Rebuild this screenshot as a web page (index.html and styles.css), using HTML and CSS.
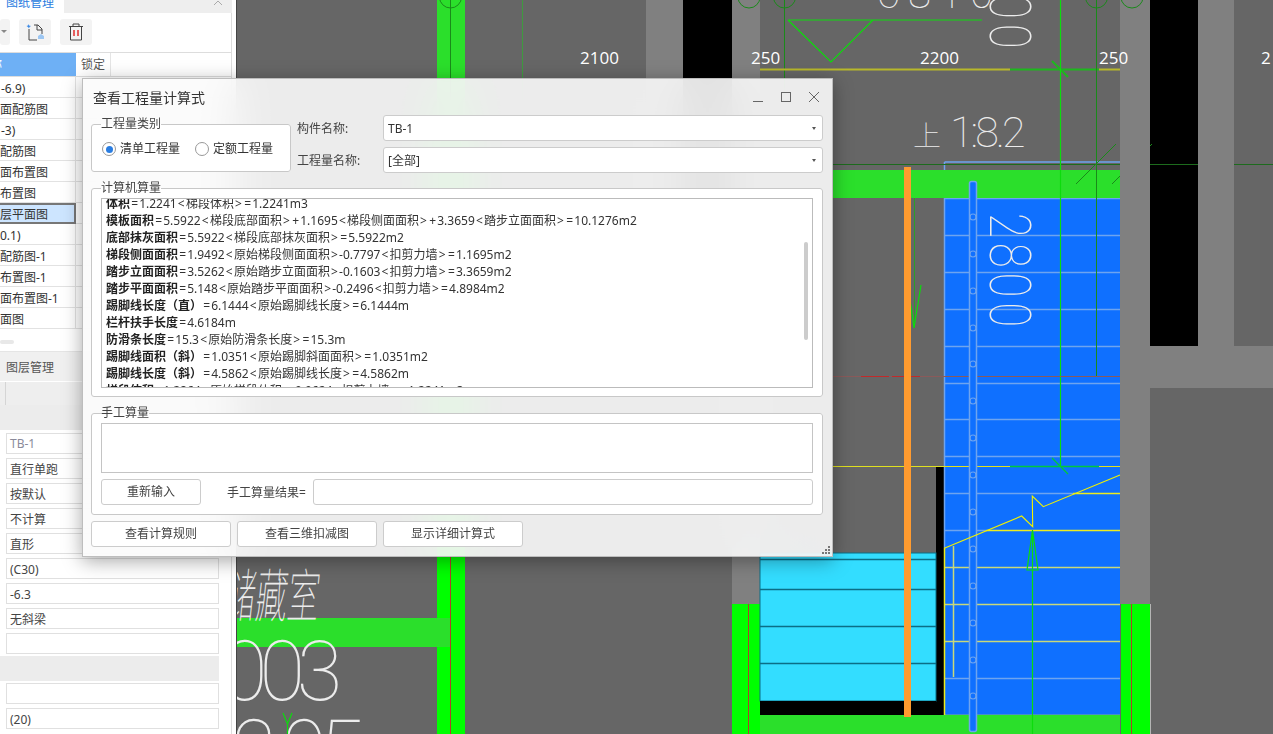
FILE: index.html
```html
<!DOCTYPE html>
<html lang="zh-CN">
<head>
<meta charset="utf-8">
<title>查看工程量计算式</title>
<link rel="stylesheet" href="styles.css">
</head>
<body>
<div class="app">
  <aside class="side">
    <div class="tabs-top">
      <span class="tab-active">图纸管理</span>
      <svg class="tab-close" width="10" height="6" viewBox="0 0 10 6"><path d="M1 5 5 1 9 5" class="ico-grey"/></svg>
    </div>
    <div class="toolbar">
      <div class="tool tool-cut"><svg width="8" height="6" viewBox="0 0 8 6"><path d="M0 1h6L3 4z" fill="#888"/></svg></div>
      <div class="tool">
        <svg width="18" height="18" viewBox="0 0 18 18">
          <path d="M3 6v11h8M8 2h4l4 4v5M16 7h-5V2" class="ico-dark"/>
          <path d="M2 1l1 1.5L5 3 3.500 4 3 5.500 2 4 .5 3 2 2.500z" fill="#3b8ae6"/>
          <path d="M12 13l3-2 3 2v3h-6z" fill="#9cc6f2"/>
        </svg>
      </div>
      <div class="tool">
        <svg width="16" height="18" viewBox="0 0 16 18">
          <path d="M1 3.500h14M5 3.500V1h6v2.500M2.500 3.500V17h11V3.500" class="ico-dark"/>
          <path d="M6 7v6M10 7v6" class="ico-red"/>
        </svg>
      </div>
    </div>
    <div class="thead">
      <div class="th-name"><span class="th-clip">称</span></div>
      <div class="th-lock">锁定</div>
    </div>
    <div class="trow"><span class="tcell tcell-in">-6.9)</span></div>
    <div class="trow"><span class="tcell">面配筋图</span></div>
    <div class="trow"><span class="tcell tcell-in">-3)</span></div>
    <div class="trow"><span class="tcell">配筋图</span></div>
    <div class="trow"><span class="tcell">面布置图</span></div>
    <div class="trow"><span class="tcell">布置图</span></div>
    <div class="trow trow-sel"><span class="tcell">层平面图</span></div>
    <div class="trow"><span class="tcell">0.1)</span></div>
    <div class="trow"><span class="tcell">配筋图-1</span></div>
    <div class="trow"><span class="tcell">布置图-1</span></div>
    <div class="trow"><span class="tcell">面布置图-1</span></div>
    <div class="trow"><span class="tcell">面图</span></div>
    <div class="hscroll"><div class="hthumb"></div></div>
    <div class="tabs-low"><span>图层管理</span></div>
    <div class="prop-head"><div class="prop-head-cell"></div></div>
    <div class="prop-group"></div>
    <div class="props">
      <div class="prop prop-muted">TB-1</div>
      <div class="prop">直行单跑</div>
      <div class="prop">按默认</div>
      <div class="prop">不计算</div>
      <div class="prop">直形</div>
      <div class="prop">(C30)</div>
      <div class="prop">-6.3</div>
      <div class="prop">无斜梁</div>
      <div class="prop"></div>
      <div class="prop-band"></div>
      <div class="prop"></div>
      <div class="prop">(20)</div>
    </div>
  </aside>

  <main class="canvas">
    <svg class="cad" width="1036" height="734" viewBox="237 0 1036 734">
      <rect x="237" y="0" width="1036" height="734" fill="#666"/>
      <!-- columns -->
      <rect x="437" y="0" width="28" height="120" fill="#2bdf2b"/>
      <rect x="437" y="120" width="28" height="614" fill="#0f0"/>
      <rect x="237" y="618" width="213" height="29" fill="#2bdf2b"/>
      <path d="M450.500 0V100" class="l-dkgreen"/>
      <path d="M450.500 557V734" class="l-red"/>
      <path d="M522.500 0V100" class="l-fgreen"/>
      <rect x="646" y="0" width="37" height="300" fill="#808080"/>
      <rect x="683" y="0" width="49" height="300" fill="#000"/>
      <rect x="732" y="0" width="28" height="604" fill="#808080"/>
      <rect x="732" y="604" width="28" height="130" fill="#0f0"/>
      <path d="M748.500 604V734" class="l-red"/>
      <!-- right walls -->
      <rect x="1120" y="0" width="30" height="604" fill="#808080"/>
      <rect x="1150" y="0" width="48" height="346" fill="#000"/>
      <rect x="1198" y="0" width="36" height="346" fill="#808080"/>
      <rect x="1120" y="346" width="153" height="42" fill="#808080"/>
      <rect x="1121" y="604" width="29" height="130" fill="#0f0"/>
      <path d="M1131.500 604V734" class="l-red"/>
      <path d="M1150.500 604V734" class="l-lgrey"/>
      <!-- top hexagons -->
      <circle cx="450.500" cy="-3" r="11" class="l-dkgreen"/>
      <circle cx="749" cy="-3" r="11" class="l-dkgreen"/>
      <circle cx="784.500" cy="-3" r="11" class="l-dkgreen"/>
      <circle cx="1096.500" cy="-3" r="11" class="l-dkgreen"/>
      <circle cx="1132" cy="-3" r="11" class="l-dkgreen"/>
      <path d="M784.500 0V100" class="l-dkgreen"/>
      <!-- dims -->
      <text x="580" y="64" class="dim">2100</text>
      <text x="751" y="64" class="dim">250</text>
      <text x="920" y="64" class="dim">2200</text>
      <text x="1099" y="64" class="dim">250</text>
      <text x="1261" y="64" class="dim">2</text>
      <path d="M760 69.500H1010" class="l-olive"/>
      <path d="M1010 69.500H1099" class="l-green"/>
      <path d="M1099 69.500H1120" class="l-olive"/>
      <path d="M1052 61 1068 77" class="l-green"/>
      <path d="M788 20H982M788 20 831 62 873 20" class="l-bright"/>
      <!-- blue stairs -->
      <rect x="944" y="198" width="176" height="517" fill="#0f70ff"/>
      <rect x="936" y="466" width="8" height="250" fill="#000"/>
      <rect x="760" y="553" width="176" height="148" class="cyan"/>
      <path d="M760 559.500H936M760 589.500H936M760 626.500H936M760 663.500H936" class="l-teal"/>
      <rect x="760" y="701" width="176" height="14" fill="#000"/>
      <path d="M944.500 162H1120M944.500 162V172M944.500 198V548" class="l-blue"/>
      <path d="M944 198.500H1120M944 235.500H1120M944 272.500H1120M944 309.500H1120M944 346.500H1120M944 383.500H1120M944 419.500H1120M944 456.500H1120" class="l-blue"/>
      <path d="M944 493.500H1073M944 530.500H986" class="l-blue"/>
      <path d="M1073 493.500H1120M986 530.500H1120" class="l-yellow"/>
      <path d="M944 567.500H1120M944 604.500H1120M944 641.500H1120M953.500 546V677" class="l-pale"/>
      <path d="M944 678.500H1120" class="l-blue"/>
      <path d="M944.500 548V715.500H1120" class="l-yellow"/>
      <rect x="833" y="170" width="287" height="28" fill="#2bdf2b"/>
      <rect x="760" y="715" width="360" height="19" fill="#2bdf2b"/>
      <path d="M833 164.500H1120M1150 164.500H1198M1234 164.500H1273" class="l-dkline"/>
      <path d="M1060.500 0V466" class="l-bright"/>
      <path d="M1096.500 0V376" class="l-dkgreen"/>
      <path d="M1076 184 1116 144" class="l-dkgreen"/>
      <path d="M1112 184 1120 176M1150 146 1152 144" class="l-dkgreen"/>
      <path d="M914.500 198V328" class="l-green2"/>
      <path d="M908 285 914 328 921 285" class="l-bright"/>
      <path d="M833 376.500H1120" class="l-redf"/>
      <path d="M861 376.500H889M892 376.500H920" class="l-redb"/>
      <path d="M833 466.500H1010M1099 466.500H1120" class="l-yellow2"/>
      <path d="M1010 466.500H1099M1052 458 1068 474" class="l-green3"/>
      <!-- rail -->
      <rect x="969.500" y="181.500" width="7" height="550" rx="2" class="rail"/>
      <g class="rail-dots">
        <circle cx="973" cy="217" r="3"/><circle cx="973" cy="254" r="3"/><circle cx="973" cy="291" r="3"/><circle cx="973" cy="328" r="3"/><circle cx="973" cy="364" r="3"/><circle cx="973" cy="401" r="3"/><circle cx="973" cy="438" r="3"/><circle cx="973" cy="475" r="3"/><circle cx="973" cy="512" r="3"/><circle cx="973" cy="549" r="3"/><circle cx="973" cy="586" r="3"/><circle cx="973" cy="623" r="3"/><circle cx="973" cy="660" r="3"/><circle cx="973" cy="696" r="3"/>
      </g>
      <!-- zigzag + arrows -->
      <path d="M944.300 548.300 1021.700 516 1032.700 526.700 1032.300 496 1043.300 506.700 1120 475" class="l-zig"/>
      <path d="M1032.500 530V734M1032.500 530 1027 570H1038Z" class="l-bright"/>
      <!-- orange -->
      <rect x="904" y="167" width="7" height="550" fill="#ff9b2f"/>
      <!-- CAD text -->
      <text x="913" y="146" class="cad-t cad-up">上</text>
      <text x="950" y="147" class="cad-t cad-scale">1:8.2</text>
      <text x="0" y="0" class="cad-t cad-v" transform="translate(990 213) rotate(90) scale(.8 1)">2800</text>
      <text x="0" y="0" class="cad-t cad-v" transform="translate(990 -6) rotate(90) scale(.8 1)">00</text>
      <text x="877" y="8" class="cad-t cad-top">6810</text>
      <text x="0" y="0" class="cad-t cad-room" transform="translate(222 617) skewX(-6) scale(.55 1)">储藏室</text>
      <text x="222" y="700" class="cad-t cad-num">003</text>
      <text x="232" y="779" class="cad-t cad-num">2 05</text>
      <path d="M287.500 734V724M283 713 287.500 724 292 713" class="l-bright"/>
      <path d="M284 734 287.500 726 291 734Z" fill="#0f0"/>
    </svg>
  </main>

  <section class="dialog">
    <header class="dlg-title">
      <span class="dlg-name">查看工程量计算式</span>
      <div class="win-ctl">
        <svg width="10" height="10" viewBox="0 0 10 10"><path d="M0 9.500H10" class="ico-win"/></svg>
        <svg width="10" height="10" viewBox="0 0 10 10"><rect x=".5" y=".5" width="9" height="9" class="ico-win"/></svg>
        <svg width="10" height="10" viewBox="0 0 10 10"><path d="M0 0 10 10M10 0 0 10" class="ico-win"/></svg>
      </div>
    </header>
    <div class="dlg-top">
      <fieldset class="grp grp-type">
        <legend>工程量类别</legend>
        <div class="radios">
          <label class="radio"><span class="dot dot-on"></span>清单工程量</label>
          <label class="radio"><span class="dot"></span>定额工程量</label>
        </div>
      </fieldset>
      <div class="fields">
        <div class="field"><span class="flabel">构件名称:</span><div class="combo"><span class="combo-val">TB-1</span><span class="caret"></span></div></div>
        <div class="field"><span class="flabel">工程量名称:</span><div class="combo"><span class="combo-val">[全部]</span><span class="caret"></span></div></div>
      </div>
    </div>
    <fieldset class="grp grp-calc">
      <legend>计算机算量</legend>
      <div class="calc">
        <div class="calc-lines">
          <p><b>体积</b><i>=</i>1.2241<i>&lt;</i>梯段体积<i>&gt;</i><i>=</i>1.2241m3</p>
          <p><b>模板面积</b><i>=</i>5.5922<i>&lt;</i>梯段底部面积<i>&gt;</i><i>+</i>1.1695<i>&lt;</i>梯段侧面面积<i>&gt;</i><i>+</i>3.3659<i>&lt;</i>踏步立面面积<i>&gt;</i><i>=</i>10.1276m2</p>
          <p><b>底部抹灰面积</b><i>=</i>5.5922<i>&lt;</i>梯段底部抹灰面积<i>&gt;</i><i>=</i>5.5922m2</p>
          <p><b>梯段侧面面积</b><i>=</i>1.9492<i>&lt;</i>原始梯段侧面面积<i>&gt;</i>-0.7797<i>&lt;</i>扣剪力墙<i>&gt;</i><i>=</i>1.1695m2</p>
          <p><b>踏步立面面积</b><i>=</i>3.5262<i>&lt;</i>原始踏步立面面积<i>&gt;</i>-0.1603<i>&lt;</i>扣剪力墙<i>&gt;</i><i>=</i>3.3659m2</p>
          <p><b>踏步平面面积</b><i>=</i>5.148<i>&lt;</i>原始踏步平面面积<i>&gt;</i>-0.2496<i>&lt;</i>扣剪力墙<i>&gt;</i><i>=</i>4.8984m2</p>
          <p><b>踢脚线长度（直）</b><i>=</i>6.1444<i>&lt;</i>原始踢脚线长度<i>&gt;</i><i>=</i>6.1444m</p>
          <p><b>栏杆扶手长度</b><i>=</i>4.6184m</p>
          <p><b>防滑条长度</b><i>=</i>15.3<i>&lt;</i>原始防滑条长度<i>&gt;</i><i>=</i>15.3m</p>
          <p><b>踢脚线面积（斜）</b><i>=</i>1.0351<i>&lt;</i>原始踢脚斜面面积<i>&gt;</i><i>=</i>1.0351m2</p>
          <p><b>踢脚线长度（斜）</b><i>=</i>4.5862<i>&lt;</i>原始踢脚线长度<i>&gt;</i><i>=</i>4.5862m</p>
          <p><b>梯段体积</b><i>=</i>1.2864<i>&lt;</i>原始梯段体积<i>&gt;</i>-0.0624<i>&lt;</i>扣剪力墙<i>&gt;</i><i>=</i>1.2241m3</p>
        </div>
        <div class="calc-thumb"></div>
      </div>
    </fieldset>
    <fieldset class="grp grp-hand">
      <legend>手工算量</legend>
      <div class="hand-area"></div>
      <div class="hand-row">
        <div class="btn btn-re">重新输入</div>
        <span class="hand-label">手工算量结果=</span>
        <div class="hand-input"></div>
      </div>
    </fieldset>
    <div class="dlg-btns">
      <div class="btn btn-main">查看计算规则</div>
      <div class="btn btn-main">查看三维扣减图</div>
      <div class="btn btn-main">显示详细计算式</div>
    </div>
    <svg class="grip" width="10" height="10" viewBox="0 0 10 10"><path d="M7 1h2v2H7zM4 4h2v2H4zM7 4h2v2H7zM1 7h2v2H1zM4 7h2v2H4zM7 7h2v2H7z" fill="#777"/></svg>
  </section>
</div>
</body>
</html>
```
FILE: styles.css
```css
* { box-sizing: border-box; }
html, body { margin: 0; height: 100%; overflow: hidden; background: #fff; }
body { font-family: "Noto Sans", "Noto Sans CJK SC", sans-serif; font-size: 12px; color: #333; }
p { margin: 0; }
.app { display: flex; width: 1273px; height: 734px; position: relative; overflow: hidden; }

/* left panel */
.side { width: 237px; flex: none; height: 734px; background: #fff; border-right: 1px solid #444; box-shadow: inset -4px 0 0 #fff, inset -5px 0 0 #ddd; overflow: hidden; }
.tabs-top { height: 13px; background: #eee; overflow: hidden; display: flex; margin-right: 4px; position: relative; }
.tab-active { width: 64px; background: #fff; padding-left: 6px; color: #2b7de0; line-height: 5px; height: 13px; }
.tab-close { position: absolute; left: 213px; top: 0; }
.ico-grey { fill: none; stroke: #aaa; }
.ico-dark { fill: none; stroke: #444; stroke-width: 1; }
.ico-red { fill: none; stroke: #e02020; stroke-width: 1.4; }
.toolbar { height: 40px; display: flex; gap: 9px; padding: 6px 0 0 0; margin-right: 4px; border-bottom: 1px solid #ddd; }
.tool { width: 32px; height: 26px; background: #f3f3f3; border-radius: 3px; display: flex; align-items: center; justify-content: center; }
.tool-cut { width: 10px; }
.thead { height: 24px; display: flex; margin-right: 4px; border-bottom: 1px solid #ddd; }
.th-name { width: 76px; background: #6eb0f5; color: #fff; overflow: hidden; line-height: 24px; }
.th-clip { margin-left: -10px; display: inline-block; }
.th-lock { width: 35px; border-right: 1px solid #e5e5e5; text-align: center; line-height: 24px; color: #555; }
.trow { height: 21px; border-bottom: 1px solid #e2e2e2; margin-right: 4px; line-height: 23px; position: relative; }
.tcell { display: block; width: 76px; height: 20px; border-right: 1px solid #e2e2e2; overflow: hidden; white-space: nowrap; }
.tcell-in { padding-left: 1px; }
.trow-sel .tcell { background: #cde5ff; border: 2px solid #777; border-left: 0; line-height: 19px; height: 21px; }
.hscroll { height: 23px; padding-top: 11px; margin-right: 4px; border-bottom: 1px solid #e5e5e5; }
.hthumb { width: 14px; height: 4px; background: #e8e8e8; border-radius: 2px; }
.tabs-low { height: 30px; background: #f0f0f0; border-bottom: 1px solid #fff; margin-right: 4px; padding: 6px 0 0 6px; line-height: 20px; color: #555; }
.prop-head { height: 23px; background: #eee; margin-right: 4px; }
.prop-head-cell { width: 6px; height: 23px; border-right: 1px solid #d5d5d5; }
.prop-group { height: 25px; background: #ececec; margin-right: 4px; }
.props { display: flex; flex-direction: column; gap: 4px; padding-top: 3px; width: 219px; }
.prop { height: 21px; margin-left: 6px; width: 213px; border: 1px solid #e0e0e0; padding-left: 3px; line-height: 21px; color: #444; background: #fff; }
.prop-muted { color: #8a8a9a; line-height: 19px; }
.prop-band { height: 25px; margin: -2px 0; background: #ececec; }

/* canvas */
.canvas { flex: 1; height: 734px; overflow: hidden; }
.cad { display: block; }
.cad path, .cad circle { fill: none; }
.cad .cyan { fill: #33ddff; stroke: #0b6e86; stroke-width: 1; }
.l-dkgreen { stroke: #1a8a1a; stroke-width: 1; }
.l-red { stroke: #b0402a; stroke-width: 1; }
.l-fgreen { stroke: #3f9a3f; stroke-width: 1; }
.l-lgrey { stroke: #b5b5b5; stroke-width: 1; }
.l-olive { stroke: #b8b82a; stroke-width: 2; }
.l-green { stroke: #1db81d; stroke-width: 2; }
.l-green2 { stroke: #2a9f2a; stroke-width: 1; }
.l-green3 { stroke: #00c83c; stroke-width: 1.4; }
.l-bright { stroke: #0cdc0c; stroke-width: 1.2; }
.l-teal { stroke: #0b6e86; stroke-width: 1.5; }
.l-blue { stroke: #6ea4ef; stroke-width: 1.5; }
.l-yellow { stroke: #ecec20; stroke-width: 1.5; }
.l-yellow2 { stroke: #e0e020; stroke-width: 1.2; }
.l-pale { stroke: #c8d87a; stroke-width: 1.5; }
.l-dkline { stroke: #1d6b1d; stroke-width: 1; }
.l-redf { stroke: #8a5a5a; stroke-width: 1; }
.l-redb { stroke: #c22a2a; stroke-width: 1; }
.l-zig { stroke: #f2f200; stroke-width: 1.1; }
.cad .rail { fill: #0f70ff; stroke: #6ea4ef; stroke-width: 1.5; }
.rail-dots circle { stroke: #6ea4ef; stroke-width: 1.2; }
.dim { fill: #fff; font-size: 17px; font-family: "Open Sans", "Noto Sans", sans-serif; }
.cad-t { fill: #ececec; font-family: Roboto, sans-serif; font-weight: 100; }
.cad-up { font-size: 28px; font-family: "Noto Sans CJK SC", sans-serif; font-weight: 100; }
.cad-scale { font-size: 43px; letter-spacing: -3px; }
.cad-v { font-size: 57px; letter-spacing: 6px; }
.cad-top { font-size: 42px; letter-spacing: 8px; }
.cad-room { font-size: 58px; font-family: "Noto Sans CJK SC", sans-serif; font-weight: 100; }
.cad-num { font-size: 83px; letter-spacing: -8px; }

/* dialog */
.dialog { position: absolute; left: 82px; top: 78px; width: 751px; height: 479px; background: rgba(251, 251, 251, .9); backdrop-filter: blur(22px); border: 1px solid #bdbdbd; box-shadow: 0 4px 18px rgba(0, 0, 0, .35); padding: 0 9px 0 8px; display: flex; flex-direction: column; }
.dlg-title { height: 36px; display: flex; align-items: center; justify-content: space-between; padding: 0 4px 0 2px; }
.dlg-name { font-size: 14px; color: #333; }
.win-ctl { display: flex; gap: 18px; }
.ico-win { fill: none; stroke: #666; stroke-width: 1; }
.dlg-top { display: flex; gap: 6px; height: 58px; }
.grp { margin: 0; padding: 0; border: 1px solid #c8c8c8; border-radius: 3px; background: #fff; min-width: 0; }
.grp legend { padding: 0; font-size: 12px; line-height: 16px; color: #444; }
.grp-type { width: 200px; height: 56px; margin-top: 1px; }
.grp-type legend { margin-left: 9px; }
.radios { display: flex; gap: 15px; padding: 9px 0 0 10px; }
.radio { display: flex; align-items: center; gap: 4px; line-height: 16px; }
.dot { width: 14px; height: 14px; border: 1px solid #999; border-radius: 50%; background: #fff; display: flex; align-items: center; justify-content: center; }
.dot-on::after { content: ""; width: 7px; height: 7px; border-radius: 50%; background: #2a7de1; }
.fields { flex: 1; display: flex; flex-direction: column; gap: 6px; }
.field { display: flex; align-items: center; height: 26px; }
.flabel { width: 86px; color: #444; }
.combo { flex: 1; height: 26px; background: #fff; border: 1px solid #ccc; border-radius: 3px; display: flex; align-items: center; justify-content: space-between; padding: 0 6px 0 4px; }
.combo-val { color: #333; }
.caret { width: 0; height: 0; border-left: 2.500px solid transparent; border-right: 2.500px solid transparent; border-top: 3px solid #555; }
.grp-calc { height: 217px; margin-top: 7px; padding: 0 9px; }
.calc { height: 190px; border: 1px solid #bbb; overflow: hidden; position: relative; background: #fff; margin-top: 2px; }
.calc-lines { margin-top: -4px; padding-left: 4px; }
.calc-lines p { line-height: 17px; white-space: nowrap; color: #333; }
.calc-lines b { color: #222; }
.calc-lines i { font-style: normal; margin: 0 1.150px; }
.calc-thumb { position: absolute; right: 4px; top: 43px; width: 4px; height: 98px; background: #ccc; border-radius: 2px; }
.grp-hand { height: 110px; margin-top: 8px; padding: 0 9px; }
.hand-area { height: 50px; border: 1px solid #c4c4c4; background: #fff; margin-top: 2px; }
.hand-row { display: flex; align-items: center; margin-top: 6px; }
.btn { height: 26px; border: 1px solid #ccc; border-radius: 3px; background: #fff; text-align: center; line-height: 24px; color: #444; }
.btn-re { width: 100px; }
.hand-label { margin-left: 26px; width: 86px; color: #444; }
.hand-input { flex: 1; height: 26px; border: 1px solid #ccc; border-radius: 3px; background: #fff; }
.dlg-btns { display: flex; gap: 6px; margin-top: 6px; }
.btn-main { width: 140px; }
.grip { position: absolute; right: 1px; bottom: 1px; }
```
